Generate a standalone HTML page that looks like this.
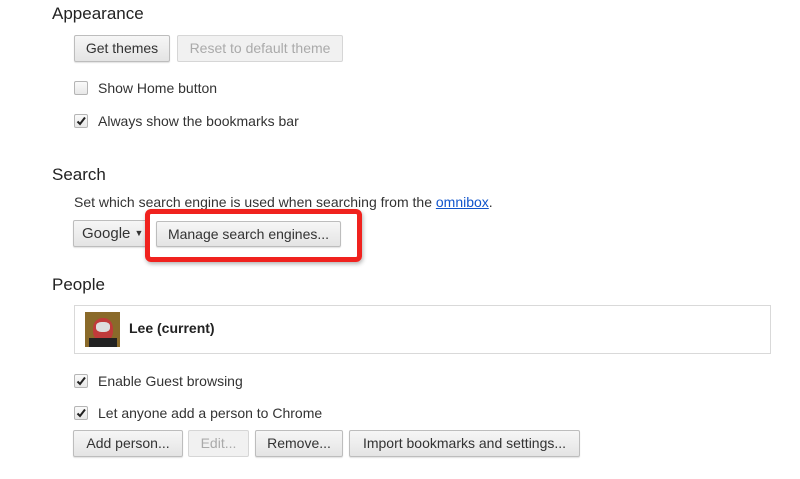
<!DOCTYPE html>
<html><head><style>
body{margin:0;width:800px;height:479px;background:#fff;font-family:"Liberation Sans",sans-serif;color:#303030;position:relative;overflow:hidden}
.a{position:absolute;white-space:nowrap}
h{position:absolute;font-size:17px;color:#222;left:52px}
.btn{position:absolute;box-sizing:border-box;border:1px solid #bdbdbd;border-radius:2px;background:linear-gradient(#f6f6f6,#e4e4e4);font-size:14px;color:#333;text-align:center;box-shadow:0 1px 1px rgba(0,0,0,.12)}
.dis{color:#aaa;background:#f1f1f1;border-color:#d6d6d6;box-shadow:none}
.cb{position:absolute;width:14px;height:14px;box-sizing:border-box;border:1px solid #b5b5b5;border-radius:2px;background:linear-gradient(#fafafa,#e8e8e8)}
.t{position:absolute;font-size:14px;color:#333}
</style></head><body>
<h style="top:4px">Appearance</h>
<div class="btn" style="left:74px;top:35px;width:96px;height:27px;line-height:25px">Get themes</div>
<div class="btn dis" style="left:177px;top:35px;width:166px;height:27px;line-height:25px">Reset to default theme</div>
<div class="cb" style="left:74px;top:81px"></div><div class="t" style="left:98px;top:80px">Show Home button</div>
<div class="cb" style="left:74px;top:114px"><svg width="12" height="12" style="position:absolute;left:0;top:0"><path d="M2.5 6.5 L5 9 L10 2.5" stroke="#222" stroke-width="2" fill="none"/></svg></div><div class="t" style="left:98px;top:113px">Always show the bookmarks bar</div>
<h style="top:165px">Search</h>
<div class="t" style="left:74px;top:194px">Set which search engine is used when searching from the <span style="color:#15c;text-decoration:underline">omnibox</span>.</div>
<div class="btn" style="left:73px;top:220px;width:75px;height:27px;line-height:25px;text-align:left;padding-left:8px;font-size:15px">Google <span style="font-size:9px;position:relative;top:-2px">▼</span></div>
<div class="btn" style="left:156px;top:221px;width:185px;height:26px;line-height:24px">Manage search engines...</div>
<div class="a" style="left:145px;top:209px;width:207px;height:43px;border:5px solid #f0221e;border-radius:6px;box-shadow:1px 2px 4px rgba(0,0,0,.3)"></div>
<h style="top:275px">People</h>
<div class="a" style="left:74px;top:305px;width:695px;height:47px;border:1px solid #d9d9d9"></div>
<div class="a" style="left:85px;top:312px;width:35px;height:35px;background:#8a6a2a"><div class="a" style="left:8px;top:6px;width:20px;height:24px;border-radius:45%;background:#c03a3a"></div><div class="a" style="left:11px;top:10px;width:14px;height:10px;background:#ddd;border-radius:40%"></div><div class="a" style="left:4px;top:26px;width:28px;height:9px;background:#222"></div></div>
<div class="t" style="left:129px;top:320px;font-weight:bold;color:#222">Lee (current)</div>
<div class="cb" style="left:74px;top:374px"><svg width="12" height="12" style="position:absolute;left:0;top:0"><path d="M2.5 6.5 L5 9 L10 2.5" stroke="#222" stroke-width="2" fill="none"/></svg></div><div class="t" style="left:98px;top:373px">Enable Guest browsing</div>
<div class="cb" style="left:74px;top:406px"><svg width="12" height="12" style="position:absolute;left:0;top:0"><path d="M2.5 6.5 L5 9 L10 2.5" stroke="#222" stroke-width="2" fill="none"/></svg></div><div class="t" style="left:98px;top:405px">Let anyone add a person to Chrome</div>
<div class="btn" style="left:73px;top:430px;width:110px;height:27px;line-height:25px">Add person...</div>
<div class="btn dis" style="left:188px;top:430px;width:61px;height:27px;line-height:25px">Edit...</div>
<div class="btn" style="left:255px;top:430px;width:88px;height:27px;line-height:25px">Remove...</div>
<div class="btn" style="left:349px;top:430px;width:231px;height:27px;line-height:25px">Import bookmarks and settings...</div>
</body></html>
